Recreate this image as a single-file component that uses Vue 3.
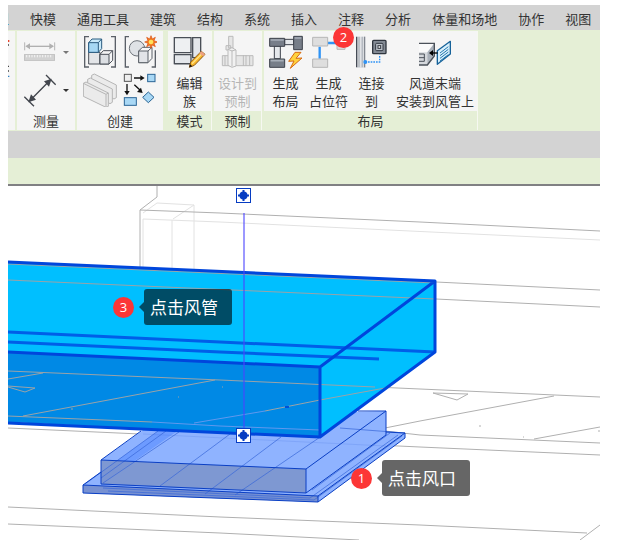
<script setup>
const tabs = ['快模', '通用工具', '建筑', '结构', '系统', '插入', '注释', '分析', '体量和场地', '协作', '视图']
</script>

<template>
  <main class="window">
    <nav class="tabs" aria-label="功能区">
      <a class="tab tab-cut" href="#">型</a>
      <a v-for="tab in tabs" :key="tab" class="tab" href="#">{{ tab }}</a>
    </nav>

    <div class="ribbon">
      <section class="panel plain cut">
        <svg class="cut-icon" viewBox="0 0 21 240" aria-hidden="true">
          <path d="M0 30h4" stroke="#e8442c" stroke-width="6" />
          <path d="M0 42h3M0 106h3M0 120h3" stroke="#444" stroke-width="4" />
          <path d="M0 136h4" stroke="#2f7fc1" stroke-width="4" />
        </svg>
      </section>

      <section class="panel plain measure">
        <div class="body measure-grid">
          <button class="icon-button" aria-label="标尺">
            <svg class="icon" viewBox="69 105 102 102">
              <path d="M74 127v24M164 127v24" stroke="#b5b5b5" stroke-width="3" />
              <path d="M80 139h78" stroke="#b0b0b0" stroke-width="4" />
              <path d="M76 139l14-9v18zM162 139l-14-9v18z" fill="#b0b0b0" />
              <rect x="73" y="164" width="91" height="17" fill="#d2d2d2" stroke="#b4b4b4" stroke-width="2" />
              <path d="M80 165v7M88 165v7M96 165v7M104 165v7M112 165v7M120 165v7M128 165v7M136 165v7M144 165v7M152 165v7" stroke="#f4f4f4" stroke-width="3" />
            </svg>
          </button>
          <button class="drop muted" aria-label="标尺选项"><span class="caret"></span></button>
          <button class="icon-button" aria-label="对齐尺寸标注">
            <svg class="icon" viewBox="69 216 102 102">
              <path d="M88 301l65-66M138 222l29 29M73 287l29 29" stroke="#42464d" stroke-width="4" />
              <path d="M155 233l-8 24-15-16zM85 304l8-24 15 16z" fill="#42464d" />
            </svg>
          </button>
          <button class="drop" aria-label="尺寸标注选项"><span class="caret"></span></button>
        </div>
        <h2 class="title">测量</h2>
      </section>

      <section class="panel plain create">
        <div class="body create-grid">
          <button class="icon-button" aria-label="创建组">
            <svg class="icon" viewBox="249 105 102 102">
              <path d="M267 110h-13v91h13M333 110h13v91h-13" fill="none" stroke="#5b6068" stroke-width="4" />
              <g stroke="#4b5058" stroke-width="3" stroke-linejoin="round">
                <path d="M266 157h34v35h-34z" fill="#e3e5e8" />
                <path d="M300 163l10-11h28v29l-11 11h-27z" fill="#f4f4f5" />
                <path d="M300 163h27v29h-27z" fill="#dcdfe3" />
                <path d="M327 163l11-11" />
                <path d="M266 128l10-11h29v29l-10 11h-29z" fill="#c9eafa" stroke="#2b5c80" />
                <path d="M266 128h29v29h-29zM295 128l10-11" fill="#a6d8f4" stroke="#2b5c80" />
              </g>
            </svg>
          </button>
          <button class="icon-button" aria-label="创建类似">
            <svg class="icon" viewBox="369 105 102 102">
              <path d="M387 110h-11v91h11M455 201h11v-50" fill="none" stroke="#5b6068" stroke-width="4" />
              <circle cx="411" cy="145" r="23" fill="#dfe2e6" stroke="#6c7178" stroke-width="3" />
              <g stroke="#5b6068" stroke-width="3" stroke-linejoin="round">
                <path d="M416 153l11-11h29v33l-12 13h-28z" fill="#f7f7f7" />
                <path d="M416 153h28v35h-28zM444 153l12-11" fill="#e2e4e8" />
              </g>
              <path d="M453 107l4 10 9-5-4 10 10 4-10 4 4 10-9-5-4 10-4-10-9 5 4-10-10-4 10-4-4-10 9 5z" fill="#f47c20" stroke="#d94f12" stroke-width="2" />
              <circle cx="453" cy="126" r="7" fill="#ffe25a" />
            </svg>
          </button>
          <button class="icon-button" aria-label="部件">
            <svg class="icon" viewBox="249 219 102 102">
              <g fill="#ebebeb" stroke="#b5b5b5" stroke-width="3" stroke-linejoin="round">
                <path d="M275 226l8-4 66 33v38l-7 4-67-34z" />
                <path d="M263 238l8-4 66 33v40l-7 4-67-34z" />
                <path d="M250 250l8-4 67 33v40l-7 3-68-33z" />
                <path d="M250 250l68 33v38M318 283l7-4" fill="none" />
              </g>
            </svg>
          </button>
          <button class="icon-button" aria-label="替换">
            <svg class="icon" viewBox="369 219 102 102">
              <rect x="373" y="223" width="21" height="21" fill="#eee" stroke="#555" stroke-width="3" />
              <g fill="#a9d8f5" stroke="#2a6595" stroke-width="3">
                <rect x="443" y="223" width="22" height="22" />
                <rect x="373" y="293" width="36" height="23" />
                <path d="M445 276l17 16-17 16-17-16z" />
              </g>
              <path d="M402 234h22M381 252v25M403 254l17 16" stroke="#111" stroke-width="4" />
              <path d="M434 234l-13-8v16zM381 286l-8-13h16zM428 279l-17-3 12-13z" fill="#111" />
            </svg>
          </button>
        </div>
        <h2 class="title">创建</h2>
      </section>

      <section class="panel mode">
        <div class="body">
          <button class="command">
            <svg class="icon" viewBox="42 108 102 102" aria-hidden="true">
              <g fill="#e4e7eb" stroke="#4a4f57" stroke-width="4">
                <path d="M46 116h50v45h-50z" fill="#eef0f2" />
                <path d="M101 116h24v60h-24z" />
                <path d="M46 167h50v27h-50z" />
              </g>
              <path d="M46 194h54" stroke="#4a4f57" stroke-width="4" />
              <path d="M127 157l11 9-32 33-15 6 4-16z" fill="#f8b62a" stroke="#8a5713" stroke-width="3" stroke-linejoin="round" />
              <path d="M130 163l-31 31" stroke="#ffe58a" stroke-width="4" />
              <path d="M127 157l11 9-6 6-11-9z" fill="#eda184" />
              <path d="M91 205l2-9 7 6z" fill="#111" />
            </svg>
            <span>编辑<br>族</span>
          </button>
        </div>
        <h2 class="title">模式</h2>
      </section>

      <section class="panel prefab">
        <div class="body">
          <button class="command" disabled>
            <svg class="icon" viewBox="184 106 102 102" aria-hidden="true">
              <g fill="#e6e6e6" stroke="#bbb" stroke-width="3">
                <path d="M207 110h13v35h-13zM199 138h14v13h-14zM188 168h92v30h-92z" />
                <path d="M205 149l12-5 12 7v48l-12 4-12-6z" fill="#f1f1f1" />
                <path d="M217 152v48M205 149l12 5 12-4M251 166v33M259 166v33M270 168v30M196 168v30" fill="none" />
              </g>
            </svg>
            <span>设计到<br>预制</span>
          </button>
        </div>
        <h2 class="title">预制</h2>
      </section>

      <section class="panel layout">
        <div class="body layout-grid">
          <button class="command">
            <svg class="icon" viewBox="327 106 102 102" aria-hidden="true">
              <g stroke="#3d424b" stroke-width="3">
                <path d="M343 139h18v38h-18zM374 119h27v16h-27z" fill="#e5e8eb" />
                <path d="M329 116h45v24h-45zM401 110h26v40h-26zM329 178h45v25h-45z" fill="#777e89" />
              </g>
              <path d="M332 121h39M404 115h20M332 183h39" stroke="#a8afb9" stroke-width="5" />
              <path d="M405 158l-19 27 16-1-11 22 35-31-18 1 15-18z" fill="#ffd23c" stroke="#d66a13" stroke-width="3" stroke-linejoin="round" />
            </svg>
            <span>生成<br>布局</span>
          </button>
          <button class="command placeholder">
            <svg class="icon" viewBox="455 106 102 102" aria-hidden="true">
              <path d="M478 141v36M502 130h28" stroke="#2f93f5" stroke-width="7" />
              <g fill="#dedede" stroke="#b6b6b6" stroke-width="3">
                <path d="M457 113h45v26h-45zM457 178h45v25h-45zM530 111h24v38h-24z" />
              </g>
            </svg>
            <span>生成<br>占位符</span>
            <i class="badge badge-two">2</i>
          </button>
          <button class="command">
            <svg class="icon" viewBox="-13 106 102 102" aria-hidden="true">
              <path d="M-9 111h28v94h-28z" fill="#e1e3e6" />
              <path d="M-8 111v92" stroke="#454b55" stroke-width="4" />
              <path d="M16 111v92" stroke="#70767f" stroke-width="3" />
              <path d="M-1 111v92M9 111v92" stroke="#b5bac1" stroke-width="5" />
              <rect x="40" y="122" width="40" height="40" rx="3" fill="#848b95" stroke="#30363f" stroke-width="4" />
              <rect x="49" y="131" width="22" height="22" rx="3" fill="#bcc2ca" stroke="#30363f" stroke-width="3" />
              <rect x="56" y="138" width="8" height="8" fill="#eee" stroke="#30363f" stroke-width="3" />
              <path d="M18 187h43v-22" fill="none" stroke="#2f93f5" stroke-width="4" stroke-dasharray="5 3" />
              <circle cx="18" cy="187" r="6" fill="#2f93f5" />
            </svg>
            <span>连接<br>到</span>
          </button>
          <button class="command">
            <svg class="icon" viewBox="172 106 102 102" aria-hidden="true">
              <path d="M175 131h46l-21 27h-25z" fill="#fafafa" />
              <path d="M175 158h25v38h-25z" fill="#d5d8dc" />
              <path d="M200 158l21-27v38l-21 27z" fill="#aab1ba" />
              <path d="M175 131h46v38l-21 27h-25" fill="none" stroke="#4b5159" stroke-width="4" />
              <path d="M175 163h16v22h-16M175 174h16" fill="none" stroke="#4b5159" stroke-width="3" />
              <path d="M230 153l39-28v38l-39 31z" fill="#d9f0fc" stroke="#176299" stroke-width="4" stroke-linejoin="round" />
              <path d="M238 160l25-19M238 168l25-19M238 176l25-19M238 184l25-19" stroke="#2377ad" stroke-width="3" />
              <path d="M213 160h18" stroke="#000" stroke-width="4" />
              <path d="M205 160l12-9v18z" />
            </svg>
            <span>风道末端<br>安装到风管上</span>
          </button>
        </div>
        <h2 class="title">布局</h2>
      </section>
    </div>

    <div class="toolbar"></div>
    <div class="options"></div>

    <div class="viewport">
      <svg class="scene" viewBox="8 186 592 354" role="img" aria-label="风管与风口三维视图">
        <g class="thin faint">
          <path d="M143 219L220 222L600 240M143 219V268M172 220V269M194 205V270M157 203L194 205L173 219M157 203L143 213" />
        </g>
        <g class="thin gray">
          <path d="M157 186V197L140 210V267M140 210L220 213L420 222L600 231" />
          <path d="M436 282L600 290M436 299L600 307M375 387L600 397M385 431L420 435L600 443M8 428L140 434L420 447L600 455" />
          <path d="M385 428L420 421L554 396M534 439L600 427M433 393L468 394L457 400ZM479 426h2M523 437h1M598 431h2" />
          <path d="M8 507L220 517L420 525L587 533M580 540L600 525M8 524L220 533L359 540" />
        </g>

        <path d="M83 485L170 421L405 433V438L318 502L83 493Z" fill="#8fb3ff" />
        <path d="M83 485L318 496V502L83 493Z" fill="#7791d2" />
        <path d="M101 460L160 418L386 411V435L306 493L101 484Z" fill="#8fb3ff" />
        <path d="M158 431L176 432L133 462L101 484V472Z" fill="#6d9bff" />
        <path d="M101 460L306 469V493L101 484Z" fill="#7b93ca" fill-opacity="0.85" />
        <g class="thin inner">
          <path d="M158 431L85 484M166 431L101 478M179 432L103 483M329 431L235 495" />
          <path d="M230 434L160 486M281 437L205 494" />
          <path d="M143 434L386 446M101 484L220 489" opacity="0.25" />
          <path d="M103 488L310 498L398 435M108 491L314 500L402 436M312 490L390 433M340 428L405 433" />
        </g>
        <g class="thin outline">
          <path d="M141 431L101 460L306 469L386 411H358M101 460V484L306 493V469M306 493L386 435V411" />
          <path d="M101 472L83 485L318 496L405 433V438L318 502L83 493V485M318 496V502M386 432L405 433" />
        </g>

        <path d="M8 262L435 281V352L320 437V367L8 352Z" fill="#00bfff" />
        <path d="M8 352L320 367V437L8 422Z" fill="#0089e5" />
        <g class="thin tan">
          <path d="M8 264L435 283M8 280L435 299M8 371L220 380L375 387M8 379L43 373M23 416L215 380M8 386L35 388L25 392L8 387" />
          <path d="M8 416L152 422M265 411L320 400L385 388M72 408v2M178 397h1M222 387h1" />
          <path d="M152 422L220 426L320 430M194 423L265 411" stroke="#6098ed" />
        </g>
        <g class="edge inside">
          <path d="M8 332L220 342L435 352M8 342L220 352L379 359" />
        </g>
        <g class="edge">
          <path d="M8 352L320 367V437M8 262L435 281V352L320 437L8 423M320 367L435 281" />
        </g>
        <path d="M285 407h4" stroke="#0050d8" stroke-width="2" />
        <path d="M244 213V430" stroke="#4b43ff" stroke-opacity="0.55" stroke-width="2" />

        <g v-for="y in [188, 428]" :key="y" :transform="`translate(236 ${y})`">
          <rect x="0.5" y="0.5" width="14" height="14" fill="#fff" stroke="#063cc2" />
          <path d="M7.5 2V13M2 7.5H13" stroke="#063cc2" stroke-width="2" />
          <circle cx="7.5" cy="7.5" r="4" fill="#063cc2" />
        </g>
      </svg>

      <div class="callout callout-duct">
        <i class="badge">3</i><span class="tip">点击风管</span>
      </div>
      <div class="callout callout-outlet">
        <i class="badge">1</i><span class="tip">点击风口</span>
      </div>
    </div>
  </main>
</template>

<style>
body {
  margin: 0;
  background: #fff;
}
</style>

<style scoped>
.window {
  padding: 5px 33px 0 8px;
  font-family: "Noto Sans CJK SC", sans-serif;
  font-size: 13px;
  line-height: 18px;
  color: #333;
}

.tabs {
  display: flex;
  gap: 21px;
  height: 22px;
  padding-top: 3px;
  background: #d3d3d3;
  overflow: hidden;
}

.tab {
  flex: none;
  line-height: 22px;
  color: #333;
  text-decoration: none;
}

.tab-cut {
  display: flex;
  justify-content: flex-end;
  width: 1px;
  overflow: hidden;
  color: #2470b0;
}

.ribbon {
  display: flex;
  padding: 1px 0;
  background: #e5efd6;
}

.panel {
  display: flex;
  flex-direction: column;
  flex: none;
  box-sizing: border-box;
  margin-right: 2px;
  border-right: 1px solid #f6f8f1;
}

.plain {
  border-right: 0;
  background: #f5f5f5;
}

.body {
  box-sizing: border-box;
  min-height: 80px;
  padding-top: 4px;
  background: #f5f5f5;
}

.title {
  margin: 0;
  font-size: 13px;
  font-weight: 400;
  line-height: 19px;
  text-align: center;
}

.cut {
  width: 7px;
}

.cut-icon {
  width: 7px;
  height: 80px;
}

.measure {
  width: 58px;
}

.create {
  width: 86px;
  margin-right: 5px;
}

.mode {
  width: 44px;
}

.prefab {
  width: 48px;
}

.layout {
  width: 214px;
  margin-right: 0;
}

.measure-grid,
.create-grid {
  display: grid;
  align-content: start;
  row-gap: 4px;
}

.measure-grid {
  grid-template-columns: 34px 12px;
  padding-left: 6px;
}

.create-grid {
  grid-template-columns: 34px 34px;
  column-gap: 6px;
  padding-left: 6px;
}

.layout-grid {
  display: grid;
  grid-template-columns: 43px 43px 43px 1fr;
}

button {
  margin: 0;
  padding: 0;
  border: 0;
  background: none;
  font: inherit;
  color: inherit;
}

.icon {
  display: block;
  width: 34px;
  height: 34px;
}

.drop {
  display: flex;
  align-items: center;
  justify-content: flex-end;
}

.caret {
  border: 3px solid transparent;
  border-top-color: #333;
  border-bottom: 0;
}

.muted .caret {
  border-top-color: #777;
}

.command {
  position: relative;
  display: flex;
  flex-direction: column;
  align-items: center;
  gap: 5px;
  width: 100%;
  white-space: nowrap;
  text-align: center;
}

.command:disabled {
  color: #b5b5b5;
}

.toolbar {
  height: 27px;
  background: #d3d3d3;
}

.options {
  height: 26px;
  border-bottom: 2px solid #808083;
  background: #e5efd6;
}

.viewport {
  position: relative;
}

.scene {
  display: block;
  width: 100%;
  height: auto;
}

.thin {
  fill: none;
  stroke-width: 1;
}

.faint {
  stroke: #e2e2e2;
}

.gray {
  stroke: #b0b0b0;
}

.tan {
  stroke: #9aa3a8;
}

.outline {
  stroke: #0a3fc4;
}

.inner {
  stroke: #3766d8;
  stroke-opacity: 0.7;
}

.edge {
  fill: none;
  stroke: #0046dc;
  stroke-width: 3;
  stroke-linejoin: round;
}

.inside {
  stroke: #005fe8;
}

.badge {
  display: flex;
  align-items: center;
  justify-content: center;
  width: 21px;
  height: 21px;
  border-radius: 50%;
  background: #fc3636;
  color: #fff;
  font-family: "Open Sans", sans-serif;
  font-size: 13px;
  font-style: normal;
  line-height: 21px;
}

.badge-two {
  position: absolute;
  top: -8px;
  right: -4px;
}

.callout {
  position: absolute;
  display: flex;
  align-items: center;
  gap: 10px;
}

.callout-duct {
  left: 105px;
  top: 103px;
}

.callout-outlet {
  left: 343px;
  top: 274px;
}

.tip {
  position: relative;
  padding: 0 14px 0 6px;
  border-radius: 3px;
  background: rgba(0, 0, 0, 0.6);
  color: #fff;
  font-size: 17px;
  line-height: 36px;
}

.tip::before {
  content: "";
  position: absolute;
  top: 13px;
  right: 100%;
  border: 5px solid transparent;
  border-right-color: rgba(0, 0, 0, 0.6);
  border-left: 0;
}
</style>
